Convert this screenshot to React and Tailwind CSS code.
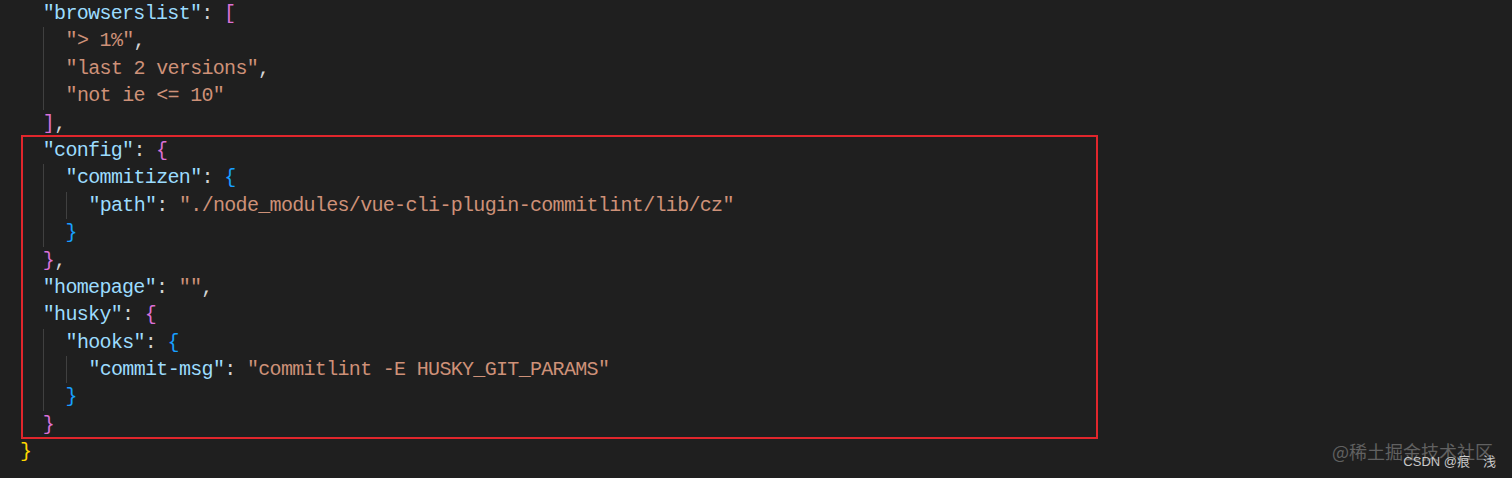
// package.json snippet in a VS Code Dark+ look

const K = 'text-[#9cdcfe]'
const S = 'text-[#ce9178]'
const P = 'text-[#d4d4d4]'
const B1 = 'text-[#ffd700]'
const B2 = 'text-[#da70d6]'
const B3 = 'text-[#179fff]'

const LINES = [
  [1, [['"browserslist"', K], [': ', P], ['[', B2]]],
  [2, [['"> 1%"', S], [',', P]]],
  [2, [['"last 2 versions"', S], [',', P]]],
  [2, [['"not ie <= 10"', S]]],
  [1, [[']', B2], [',', P]]],
  [1, [['"config"', K], [': ', P], ['{', B2]]],
  [2, [['"commitizen"', K], [': ', P], ['{', B3]]],
  [3, [['"path"', K], [': ', P], ['"./node_modules/vue-cli-plugin-commitlint/lib/cz"', S]]],
  [2, [['}', B3]]],
  [1, [['}', B2], [',', P]]],
  [1, [['"homepage"', K], [': ', P], ['""', S], [',', P]]],
  [1, [['"husky"', K], [': ', P], ['{', B2]]],
  [2, [['"hooks"', K], [': ', P], ['{', B3]]],
  [3, [['"commit-msg"', K], [': ', P], ['"commitlint -E HUSKY_GIT_PARAMS"', S]]],
  [2, [['}', B3]]],
  [1, [['}', B2]]],
  [0, [['}', B1]]],
]

function Line({ depth, parts }) {
  return (
    <div className="flex h-[27.4px] items-center whitespace-pre pl-[20px]">
      {Array.from({ length: depth }).map((_, i) => (
        <span
          key={i}
          className={`inline-block h-full w-[22.8px] shrink-0 ${i > 0 ? 'border-l border-[#404040]' : ''}`}
        />
      ))}
      {parts.map(([t, c], i) => (
        <span key={i} className={c}>{t}</span>
      ))}
    </div>
  )
}

export default function App() {
  const render = (from, to) =>
    LINES.slice(from, to).map(([d, parts], i) => <Line key={from + i} depth={d} parts={parts} />)

  return (
    <div className="relative h-[478px] w-[1512px] overflow-hidden bg-[#1f1f1f] font-['Liberation_Mono',monospace] text-[20px] leading-[27.4px] tracking-[-0.68px]">
      {render(0, 5)}

      {/* ── Bloc encadré ─────────────────────── */}
      <div className="relative">
        {render(5, 16)}
        <div className="pointer-events-none absolute left-[21px] top-[-2px] bottom-[-1px] w-[1077px] border-2 border-[#e0262c]" />
      </div>

      {render(16, 17)}

      {/* ── Filigrane ────────────────────────── */}
      <div className="absolute right-[19px] top-[439px] font-['Noto_Sans_CJK_SC',sans-serif] text-[18px] leading-[24px] tracking-normal text-[#616161]">
        @稀土掘金技术社区
      </div>
      <div className="absolute right-[16px] top-[453px] font-['Liberation_Sans','Noto_Sans_CJK_SC',sans-serif] text-[13px] leading-[18px] tracking-normal text-[#c8c8c8]">
        CSDN @痕　浅
      </div>
    </div>
  )
}
